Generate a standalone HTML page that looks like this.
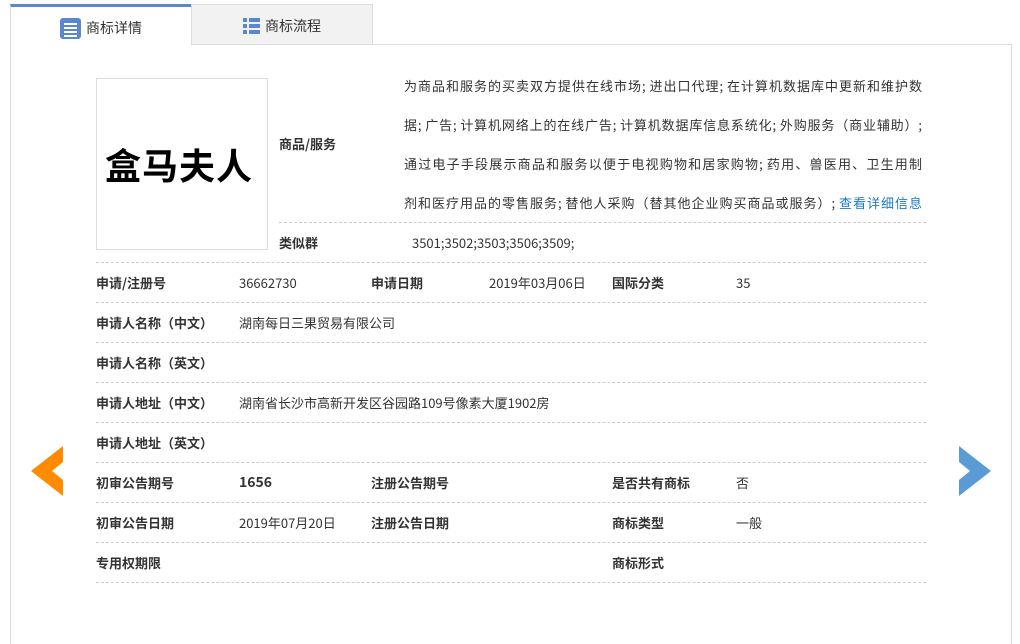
<!DOCTYPE html>
<html><head><meta charset="utf-8"><style>
*{margin:0;padding:0;box-sizing:border-box}
body{width:1020px;height:587px;background:#fff;position:relative;overflow:hidden;font-family:"Noto Sans CJK SC","Liberation Sans",sans-serif;font-size:13px;line-height:18px;color:#333}
.a{position:absolute;white-space:nowrap}
.b{font-weight:bold;color:#333}
.d{position:absolute;left:96px;width:830px;border-top:1px dashed #ccc;height:0}
.g{position:absolute;left:404px;width:518px;white-space:nowrap;text-align-last:justify;text-align:justify}
</style></head><body>
<div class="a" style="left:10px;top:4px;width:182px;height:41px;border-top:3px solid #5b87d0;border-left:1px solid #ddd;background:#fff"></div>
<div class="a" style="left:191px;top:4px;width:182px;height:41px;border:1px solid #ddd;background:#f2f2f2"></div>
<div class="a" style="left:10px;top:44px;width:1002px;height:600px;border-left:1px solid #ddd;border-right:1px solid #ddd"></div>
<div class="a" style="left:191px;top:44px;width:821px;border-top:1px solid #ddd"></div>
<svg class="a" style="left:60px;top:18px" width="21" height="21"><rect width="21" height="21" rx="3" fill="#5b87d0"/><g stroke="#fff" stroke-width="2"><line x1="4" y1="6" x2="17" y2="6"/><line x1="4" y1="10" x2="17" y2="10"/><line x1="4" y1="14" x2="17" y2="14"/><line x1="4" y1="18" x2="17" y2="18"/></g></svg>
<div class="a" style="left:86px;top:18px;font-size:14px;line-height:20px">商标详情</div>
<svg class="a" style="left:243px;top:18px" width="17" height="17"><g fill="#5b87d0"><rect x="0" y="0" width="4" height="4"/><rect x="6" y="0" width="11" height="4"/><rect x="0" y="6" width="4" height="4"/><rect x="6" y="6" width="11" height="4"/><rect x="0" y="12" width="4" height="4"/><rect x="6" y="12" width="11" height="4"/></g></svg>
<div class="a" style="left:265px;top:16px;font-size:14px;line-height:20px">商标流程</div>

<div class="a" style="left:96px;top:78px;width:172px;height:172px;border:1px solid #ddd"></div>
<div class="a" style="left:105px;top:142px;font-size:36px;font-weight:bold;color:#000;letter-spacing:1px;line-height:44px">盒马夫人</div>

<div class="a b" style="left:279px;top:135px">商品/服务</div>
<div class="g" style="top:77px">为商品和服务的买卖双方提供在线市场; 进出口代理; 在计算机数据库中更新和维护数</div>
<div class="g" style="top:116px">据; 广告; 计算机网络上的在线广告; 计算机数据库信息系统化; 外购服务（商业辅助）;</div>
<div class="g" style="top:155px">通过电子手段展示商品和服务以便于电视购物和居家购物; 药用、兽医用、卫生用制</div>
<div class="g" style="top:194px">剂和医疗用品的零售服务; 替他人采购（替其他企业购买商品或服务）; <span style="color:#1a7bc9">查看详细信息</span></div>
<div class="d" style="left:279px;width:647px;top:222px"></div>
<div class="a b" style="left:279px;top:234px">类似群</div>
<div class="a" style="left:412px;top:234px">3501;3502;3503;3506;3509;</div>
<div class="d" style="top:262px"></div>

<div class="a b" style="left:96px;top:274px">申请/注册号</div><div class="a" style="left:239px;top:274px">36662730</div>
<div class="a b" style="left:371px;top:274px">申请日期</div><div class="a" style="left:489px;top:274px">2019年03月06日</div>
<div class="a b" style="left:612px;top:274px">国际分类</div><div class="a" style="left:736px;top:274px">35</div>
<div class="d" style="top:302px"></div>
<div class="a b" style="left:96px;top:314px">申请人名称（中文）</div><div class="a" style="left:239px;top:314px">湖南每日三果贸易有限公司</div>
<div class="d" style="top:342px"></div>
<div class="a b" style="left:96px;top:354px">申请人名称（英文）</div>
<div class="d" style="top:382px"></div>
<div class="a b" style="left:96px;top:394px">申请人地址（中文）</div><div class="a" style="left:239px;top:394px">湖南省长沙市高新开发区谷园路109号像素大厦1902房</div>
<div class="d" style="top:422px"></div>
<div class="a b" style="left:96px;top:434px">申请人地址（英文）</div>
<div class="d" style="top:462px"></div>
<div class="a b" style="left:96px;top:474px">初审公告期号</div><div class="a b" style="left:239px;top:473px;font-size:14px">1656</div>
<div class="a b" style="left:371px;top:474px">注册公告期号</div>
<div class="a b" style="left:612px;top:474px">是否共有商标</div><div class="a" style="left:736px;top:474px">否</div>
<div class="d" style="top:502px"></div>
<div class="a b" style="left:96px;top:514px">初审公告日期</div><div class="a" style="left:239px;top:514px">2019年07月20日</div>
<div class="a b" style="left:371px;top:514px">注册公告日期</div>
<div class="a b" style="left:612px;top:514px">商标类型</div><div class="a" style="left:736px;top:514px">一般</div>
<div class="d" style="top:542px"></div>
<div class="a b" style="left:96px;top:554px">专用权期限</div>
<div class="a b" style="left:612px;top:554px">商标形式</div>
<div class="d" style="top:582px"></div>

<svg class="a" style="left:30px;top:445px" width="34" height="52"><polygon points="33,1 1,26 33,51 33,35 22,26 33,17" fill="#ff8c00"/></svg>
<svg class="a" style="left:958px;top:445px" width="34" height="52"><polygon points="1,1 33,26 1,51 1,35 12,26 1,17" fill="#5b9bd5"/></svg>
</body></html>
